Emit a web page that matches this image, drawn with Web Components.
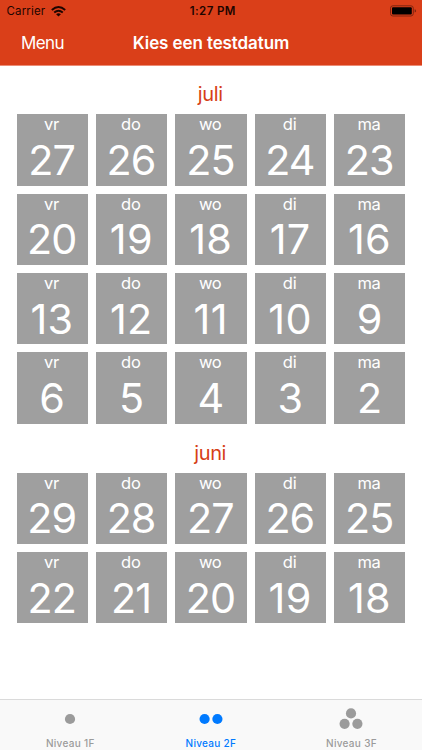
<!DOCTYPE html>
<html lang="nl"><head><meta charset="utf-8"><title>Kies een testdatum</title>
<style>html,body{margin:0;height:100%;background:#fff}body{font-family:Inter,"Liberation Sans",sans-serif}</style></head>
<body><date-picker-app></date-picker-app>
<script>
const define=(name,html)=>{
  customElements.define(name,class extends HTMLElement{
    connectedCallback(){
      if(this.shadowRoot)return;
      const t=document.createElement('template');
      t.innerHTML=typeof html==='function'?html(this):html;
      this.attachShadow({mode:'open'}).append(t.content.cloneNode(true));
    }
  });
};
define('status-bar',`<style>
:host{display:grid;grid-template-columns:1fr auto 1fr;align-items:center;height:22px;padding:0 5px 0 6.6px;color:#1d0500;font-size:11.5px;line-height:22px}
.l{display:flex;align-items:center;gap:5.6px}.carrier{letter-spacing:.13px}
.time{font-weight:600;letter-spacing:.42px;padding-left:2px}
.r{display:flex;justify-content:flex-end}svg{display:block}
</style>
<div class="l"><span class="carrier">Carrier</span><svg width="15" height="11" viewBox="0 0 15 11" fill="none" stroke="#1d0500" stroke-width="1.9"><path d="M.8 4Q7.5-1.9 14.2 4M3.2 6.5Q7.5 2.8 11.8 6.5"/><path d="M5.1 8.2Q7.5 6.2 9.9 8.2L7.5 10.6Z" fill="#1d0500" stroke="none"/></svg></div>
<span class="time">1:27 PM</span>
<div class="r"><svg width="27" height="12" viewBox="0 0 27 12"><rect x=".5" y=".8" width="22.8" height="10.2" rx="2.4" fill="none" stroke="#802510"/><rect x="2" y="2.3" width="19.8" height="7.2" rx="1" fill="#000"/><path d="M24.6 4.2q1.5.4 1.5 1.7t-1.5 1.7z" fill="#802510"/></svg></div>`);
define('nav-bar',`<style>
:host{display:grid;grid-template-columns:1fr auto 1fr;align-items:center;height:43px;padding:0 21px;border-bottom:1px solid #ec8c75;color:#fff;font-size:17px;line-height:43px}
.menu{letter-spacing:-.6px}.title{font-weight:600;letter-spacing:-.1px}
</style><span class="menu"><slot name="menu"></slot></span><span class="title"><slot></slot></span><span></span>`);
define('day-tile',`<style>
:host{display:block;height:71.3px;background:#9f9f9f;color:#fff;text-align:center;overflow:hidden}
.d{font-size:16.5px;line-height:20.6px;letter-spacing:-.3px;padding-right:1.6px}.n{font-size:41.3px;line-height:50px;font-weight:375;letter-spacing:-1px;padding-right:1.2px}
:host([teen]) .n{letter-spacing:.3px;padding-right:.6px}
</style><div class="d"><slot name="day"></slot></div><div class="n"><slot></slot></div>`);
define('month-section',el=>{
  const days=['vr','do','wo','di','ma'];
  return `<style>
:host{display:block}h2{margin:0;padding:1px 1.6px 6.7px 0;font-size:20px;line-height:25.4px;font-weight:400;color:#d63f18;text-align:center;letter-spacing:-.4px}
.g{display:grid;grid-template-columns:repeat(5,1fr);gap:8.1px}
</style><h2>${el.getAttribute('name')}</h2><div class="g">${el.getAttribute('dates').split(' ').map((n,i)=>`<day-tile${n[0]==='1'?' teen':''}><span slot="day">${days[i%5]}</span>${n}</day-tile>`).join('')}</div>`;
});
define('tab-item',el=>{
  const c={1:[[12,11]],2:[[5.6,11],[18.4,11]],3:[[12,5.4],[5.6,15.8],[18.4,15.8]]}[el.getAttribute('dots')];
  return `<style>
:host{display:flex;flex-direction:column;align-items:center;color:#9b9b9b;font-size:10px;font-weight:500;letter-spacing:.3px;line-height:14px}
:host([active]){color:#007aff}svg{display:block;margin:8px 0 6px}
</style><svg width="24" height="22" fill="currentColor">${c.map(p=>`<circle cx="${p[0]}" cy="${p[1]}" r="5.1"/>`).join('')}</svg><span><slot></slot></span>`;
});
define('tab-bar',`<style>:host{display:grid;grid-template-columns:repeat(3,140.6px);justify-content:start;box-sizing:border-box;height:51px;background:#f9f9f9;border-top:1px solid #dadada}</style><slot></slot>`);
define('date-picker-app',`<style>
:host{display:flex;flex-direction:column;height:750px;width:422px;overflow:hidden}
header{background:#da3f19}main{flex:1;display:flex;flex-direction:column;gap:15.8px;padding:15.2px 16.6px 0}
</style>
<header><status-bar></status-bar><nav-bar><span slot="menu">Menu</span>Kies een testdatum</nav-bar></header>
<main><month-section name="juli" dates="27 26 25 24 23 20 19 18 17 16 13 12 11 10 9 6 5 4 3 2"></month-section>
<month-section name="juni" dates="29 28 27 26 25 22 21 20 19 18"></month-section></main>
<tab-bar><tab-item dots="1">Niveau 1F</tab-item><tab-item dots="2" active>Niveau 2F</tab-item><tab-item dots="3">Niveau 3F</tab-item></tab-bar>`);
</script></body></html>
